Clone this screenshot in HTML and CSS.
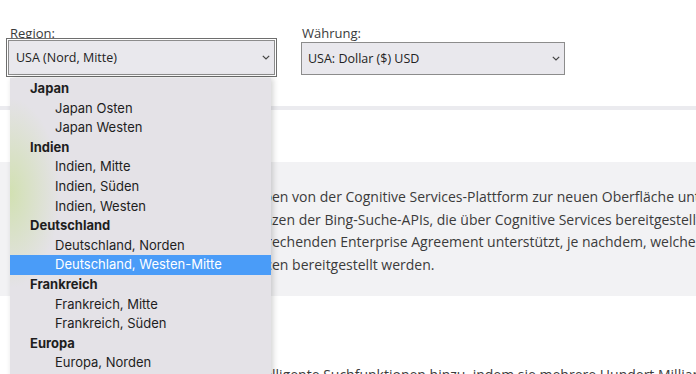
FILE: index.html
```html
<!DOCTYPE html>
<html>
<head>
<title>Preise</title>
<meta name="viewport" content="width=device-width, initial-scale=1">
<link rel="stylesheet" href="styles.css">
</head>
<body>
    <header class="topbar">
        <div class="field field-region">
            <label class="field-label">Region:</label>
            <div class="focus-ring">
                <div class="select">
                    <span>USA (Nord, Mitte)</span>
                    <svg class="chevron" width="8" height="5" viewBox="0 0 8 5"><path d="M0.8 0.8 L4 4 L7.2 0.8" fill="none" stroke="#444" stroke-width="1.2"/></svg>
                </div>
            </div>
        </div>
        <div class="field field-currency">
            <label class="field-label">Währung:</label>
            <div class="select select-plain">
                <span>USA: Dollar ($) USD</span>
                <svg class="chevron" width="8" height="5" viewBox="0 0 8 5"><path d="M0.8 0.8 L4 4 L7.2 0.8" fill="none" stroke="#444" stroke-width="1.2"/></svg>
            </div>
        </div>
    </header>

    <main class="content">
        <section class="notice">
            <!-- the lead part of each line sits under the open list -->
            <p>
                <span class="lead">Die Bing-Suche-APIs werden verschob</span>en von der Cognitive Services-Plattform zur neuen Oberfläche unter Azure.<br>
                <span class="lead">Bestehende Instan</span>zen der Bing-Suche-APIs, die über Cognitive Services bereitgestellt wurden,<br>
                <span class="lead">werden mit dem entspr</span>echenden Enterprise Agreement unterstützt, je nachdem, welcher Zeitraum<br>
                <span class="lead">für die Ressourc</span>en bereitgestellt werden.
            </p>
        </section>
        <p class="intro"><span class="lead">Die Bing-Suche-APIs fügen Ihren Apps inte</span>lligente Suchfunktionen hinzu, indem sie mehrere Hundert Milliarden Webseiten durchsuchen.</p>
    </main>

    <!-- open list of the region select -->
    <ul class="dropdown">
        <li class="group">Japan</li>
        <li class="option">Japan Osten</li>
        <li class="option">Japan Westen</li>
        <li class="group">Indien</li>
        <li class="option">Indien, Mitte</li>
        <li class="option">Indien, Süden</li>
        <li class="option">Indien, Westen</li>
        <li class="group">Deutschland</li>
        <li class="option">Deutschland, Norden</li>
        <li class="option selected">Deutschland, Westen-Mitte</li>
        <li class="group">Frankreich</li>
        <li class="option">Frankreich, Mitte</li>
        <li class="option">Frankreich, Süden</li>
        <li class="group">Europa</li>
        <li class="option">Europa, Norden</li>
    </ul>
</body>
</html>
```
FILE: styles.css
```css
html, body{
    margin: 0;
    padding: 0;
    height: 100%;
    overflow: hidden;
    background-color: #fff;
    font-family: "Open Sans", "Noto Sans", sans-serif;
    color: #333;
}

.topbar{
    display: flex;
    gap: 24px;
    height: 110px;
    padding-left: 6px;
    box-sizing: border-box;
    border-bottom: 4px solid #ebebef;
}

.field{
    display: flex;
    flex-direction: column;
}

.field-label{
    font-size: 13px;
    line-height: 16px;
    color: #3a3a3a;
    padding-left: 4px;
}

.field-region .field-label{
    margin-top: 25px;
    margin-bottom: -3px;
}

.field-currency .field-label{
    margin-top: 25px;
    margin-bottom: 1px;
    padding-left: 1px;
}

.focus-ring{
    width: 271px;
    height: 39px;
    box-sizing: border-box;
    border: 1px solid #6e6e6e;
    padding: 1px;
    background: #fff;
}

.select{
    display: flex;
    align-items: center;
    justify-content: space-between;
    height: 100%;
    box-sizing: border-box;
    border: 1px solid #8c8c8c;
    background-color: #e9e8ed;
    padding: 0 4px 0 7px;
    font-size: 12.5px;
    color: #222;
}

.select-plain{
    width: 264px;
    height: 33px;
    padding-left: 6px;
}

.chevron{
    flex: none;
}

.content{
    padding-top: 52px;
}

.notice{
    background-color: #f2f2f4;
    height: 134px;
    box-sizing: border-box;
    padding: 24px 0 0 24px;
}

.notice p, .intro{
    margin: 0;
    white-space: nowrap;
    font-size: 14px;
    line-height: 22.5px;
    color: #3b3b3b;
}

.lead{
    display: inline-block;
    width: 248px;
    overflow: hidden;
    text-align: right;
    direction: rtl;
    vertical-align: top;
}

.intro{
    padding: 68px 0 0 24px;
}

.dropdown{
    position: absolute;
    top: 78px;
    left: 10px;
    width: 261px;
    height: 310px;
    margin: 0;
    padding: 1px 0 0 0;
    list-style: none;
    background-color: #e4e2e7;
    background-image: radial-gradient(ellipse 50px 95px at 0px 115px, rgba(205, 224, 165, 0.8), rgba(205, 224, 165, 0));
    box-shadow: 2px 0 6px rgba(0, 0, 0, 0.18);
    font-family: Inter, "Noto Sans", sans-serif;
    font-size: 13px;
    color: #1e1e1e;
}

.dropdown li{
    height: 19.6px;
    line-height: 19.6px;
}

.group{
    font-weight: bold;
    padding-left: 20px;
}

.option{
    padding-left: 45px;
}

.selected{
    background-color: #4a9cf8;
    color: #fff;
}
```
